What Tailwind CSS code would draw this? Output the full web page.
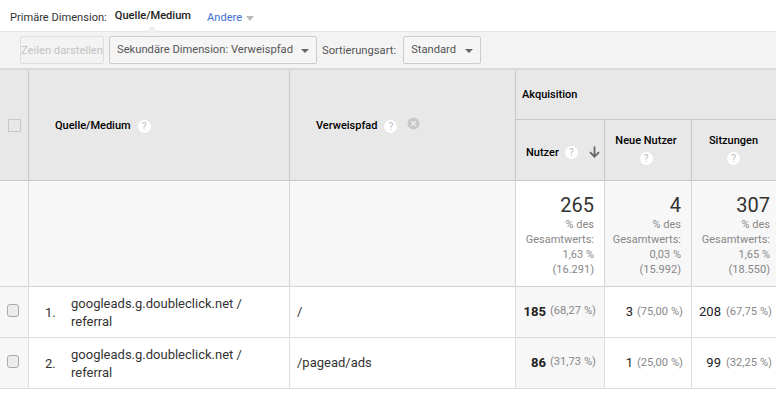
<!DOCTYPE html>
<html lang="en">
<head>
  <meta charset="UTF-8">
  <title>Quelle/Medium</title>
  <script src="https://cdn.jsdelivr.net/npm/@tailwindcss/browser@4"></script>
</head>
<body class="bg-white font-['Roboto',sans-serif] text-[#222] overflow-hidden w-[776px] h-[400px]">
  <!-- dimension tabs -->
  <div class="relative h-[32px] border-b border-[#e4e4e4] flex items-center pl-[10px] pt-[5px] text-[11.1px]">
    <span class="text-[#333]">Primäre Dimension:</span>
    <span class="ml-[8px] font-medium text-[#222] -mt-[4px]">Quelle/Medium</span>
    <span class="ml-[16px] text-[#3f6fd1]">Andere</span>
    <span class="ml-[4px] w-0 h-0 border-x-[4px] border-x-transparent border-t-[5px] border-t-[#bbb]"></span>
    <svg class="absolute left-[146px] top-[26px]" width="12" height="7" viewBox="0 0 12 7"><path d="M0 6.5h1L6 1l5 5.5h1" fill="#f3f3f3" stroke="#ddd"/></svg>
  </div>
  <!-- toolbar -->
  <div class="h-[36px] bg-[#f3f3f3] flex items-center pl-[20px] text-[11.2px]">
    <div class="w-[84px] h-[28px] border border-[#ddd] rounded-[2px] flex items-center justify-center pt-[2px] text-[#c4c4c4] whitespace-nowrap">Zeilen darstellen</div>
    <div class="ml-[5px] w-[208px] h-[28px] border border-[#ccc] rounded-[2px] bg-[#f5f5f5] flex items-center justify-between pl-[7px] pr-[7px] pt-[1px] text-[#555]">
      Sekundäre Dimension: Verweispfad
      <span class="w-0 h-0 border-x-[4px] border-x-transparent border-t-[4px] border-t-[#666]"></span>
    </div>
    <span class="ml-[5px] pt-[2px] text-[#555]">Sortierungsart:</span>
    <div class="ml-[7px] w-[78px] h-[28px] border border-[#ccc] rounded-[2px] bg-[#f5f5f5] flex items-center justify-between pl-[7px] pr-[7px] pt-[1px] text-[#555]">
      Standard
      <span class="w-0 h-0 border-x-[4px] border-x-transparent border-t-[4px] border-t-[#666]"></span>
    </div>
  </div>
  <!-- table -->
  <div class="grid grid-cols-[29px_261px_226px_89px_87px_85px] grid-rows-[50px_61px_106px_51px_51px] border-t-2 border-[#d9d9d9] text-[11.5px]">
    <!-- header -->
    <div class="row-span-2 bg-[#e8e8e8] border-r border-b border-[#c9c9c9] flex items-center justify-center pt-[1px]">
      <span class="w-[13px] h-[13px] border border-[#c9c9c9] bg-[#e8e8e8]"></span>
    </div>
    <div class="row-span-2 bg-[#e8e8e8] border-r border-b border-[#c9c9c9] flex items-center pl-[26px] pt-[2px] font-medium text-[11px] text-black">
      Quelle/Medium
      <span class="ml-[7px] w-[13px] h-[13px] rounded-full bg-white text-[#bbb] text-[10px] font-normal flex items-center justify-center">?</span>
    </div>
    <div class="row-span-2 bg-[#e8e8e8] border-r border-b border-[#c9c9c9] flex items-center pl-[26px] pt-[2px] font-medium text-[11px] text-black">
      Verweispfad
      <span class="ml-[7px] w-[13px] h-[13px] rounded-full bg-white text-[#bbb] text-[10px] font-normal flex items-center justify-center">?</span>
      <svg class="ml-[10px] mb-[5px]" width="13" height="13" viewBox="0 0 13 13"><circle cx="6.5" cy="6.5" r="6" fill="#c8c8c8"/><path d="M4.2 4.2l4.6 4.6M8.8 4.2l-4.6 4.6" stroke="#eee" stroke-width="1.3"/></svg>
    </div>
    <div class="col-span-3 bg-[#e8e8e8] border-b border-[#c9c9c9] flex items-center pl-[6px] pt-[2px] font-medium text-[11px] text-black">Akquisition</div>
    <div class="bg-[#e8e8e8] border-r border-b border-[#c9c9c9] flex items-center pl-[10px] pt-[7px] font-medium text-[11px] text-black">
      Nutzer
      <span class="ml-[6px] mb-[2px] w-[13px] h-[13px] rounded-full bg-white text-[#bbb] text-[10px] font-normal flex items-center justify-center">?</span>
      <svg class="ml-[11px] mb-[3px]" width="11" height="12" viewBox="0 0 11 12"><path d="M5.5 0.5v10M1 6.2l4.5 4.5 4.5-4.5" fill="none" stroke="#666" stroke-width="1.8"/></svg>
    </div>
    <div class="bg-[#e8e8e8] border-r border-b border-[#c9c9c9] flex flex-col items-center pt-[13px] pr-[4px] font-medium text-[11px] text-black">
      Neue Nutzer
      <span class="mt-[2px] w-[13px] h-[13px] rounded-full bg-white text-[#bbb] text-[10px] font-normal flex items-center justify-center">?</span>
    </div>
    <div class="bg-[#e8e8e8] border-b border-[#c9c9c9] flex flex-col items-center pt-[13px] pr-[2px] font-medium text-[11px] text-black">
      Sitzungen
      <span class="mt-[2px] w-[13px] h-[13px] rounded-full bg-white text-[#bbb] text-[10px] font-normal flex items-center justify-center">?</span>
    </div>
    <!-- totals -->
    <div class="bg-[#f7f7f7] border-r border-b border-[#d4d4d4]"></div>
    <div class="bg-[#f7f7f7] border-r border-b border-[#d4d4d4]"></div>
    <div class="bg-[#f7f7f7] border-r border-b border-[#d4d4d4]"></div>
    <div class="bg-white border-r border-b border-[#d4d4d4] text-right pr-[10px] pt-[12px] text-[#888] leading-[15px] text-[11px]">
      <div class="text-[20px] text-[#333] leading-[24px]">265</div>% des<br>Gesamtwerts:<br>1,63 %<br>(16.291)
    </div>
    <div class="bg-[#f7f7f7] border-r border-b border-[#d4d4d4] text-right pr-[10px] pt-[12px] text-[#888] leading-[15px] text-[11px]">
      <div class="text-[20px] text-[#333] leading-[24px]">4</div>% des<br>Gesamtwerts:<br>0,03 %<br>(15.992)
    </div>
    <div class="bg-[#f7f7f7] border-b border-[#d4d4d4] text-right pr-[7px] pt-[12px] text-[#888] leading-[15px] text-[11px]">
      <div class="text-[20px] text-[#333] leading-[24px]">307</div>% des<br>Gesamtwerts:<br>1,65 %<br>(18.550)
    </div>
    <!-- row 1 -->
    <div class="bg-[#f7f7f7] border-r border-b border-[#dedede] flex items-center justify-center pb-[3px] pr-[2px]">
      <span class="w-[12px] h-[13px] border border-[#aaa] rounded-[3px] bg-[#ececec]"></span>
    </div>
    <div class="border-r border-b border-[#dedede] flex pl-[16px] items-center text-[13px] text-[#333]">
      <span class="w-[26px] pt-[1px]">1.</span>
      <span class="leading-[18px] w-[190px] pt-[2px]">googleads.g.doubleclick.net / referral</span>
    </div>
    <div class="border-r border-b border-[#dedede] flex items-center pl-[7px] pb-[1px] text-[13px] text-[#333]">/</div>
    <div class="bg-[#f7f7f7] border-r border-b border-[#dedede] flex items-center justify-end pr-[8px] pb-[1px] text-[#888] text-[11.2px] whitespace-nowrap">
      <b class="font-bold text-[13px] text-[#222] mr-[4px]">185</b>(68,27 %)
    </div>
    <div class="border-r border-b border-[#dedede] flex items-center justify-end pr-[8px] text-[#888] text-[11.2px] whitespace-nowrap">
      <span class="text-[13px] text-[#222] mr-[4px]">3</span>(75,00 %)
    </div>
    <div class="border-b border-[#dedede] flex items-center justify-end pr-[5px] text-[#888] text-[11.2px] whitespace-nowrap">
      <span class="text-[13px] text-[#222] mr-[5px]">208</span>(67,75 %)
    </div>
    <!-- row 2 -->
    <div class="bg-[#f7f7f7] border-r border-b border-[#dedede] flex items-center justify-center pb-[3px] pr-[2px]">
      <span class="w-[12px] h-[13px] border border-[#aaa] rounded-[3px] bg-[#ececec]"></span>
    </div>
    <div class="border-r border-b border-[#dedede] flex pl-[16px] items-center text-[13px] text-[#333]">
      <span class="w-[26px] pt-[1px]">2.</span>
      <span class="leading-[18px] w-[190px] pt-[2px]">googleads.g.doubleclick.net / referral</span>
    </div>
    <div class="border-r border-b border-[#dedede] flex items-center pl-[7px] pb-[1px] text-[13px] text-[#333]">/pagead/ads</div>
    <div class="bg-[#f7f7f7] border-r border-b border-[#dedede] flex items-center justify-end pr-[8px] pb-[1px] text-[#888] text-[11.2px] whitespace-nowrap">
      <b class="font-bold text-[13px] text-[#222] mr-[4px]">86</b>(31,73 %)
    </div>
    <div class="border-r border-b border-[#dedede] flex items-center justify-end pr-[8px] text-[#888] text-[11.2px] whitespace-nowrap">
      <span class="text-[13px] text-[#222] mr-[4px]">1</span>(25,00 %)
    </div>
    <div class="border-b border-[#dedede] flex items-center justify-end pr-[5px] text-[#888] text-[11.2px] whitespace-nowrap">
      <span class="text-[13px] text-[#222] mr-[5px]">99</span>(32,25 %)
    </div>
  </div>
</body>
</html>
